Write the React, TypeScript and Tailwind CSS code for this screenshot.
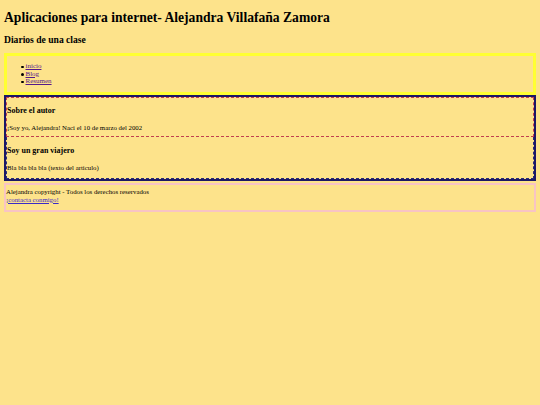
import React from "react";

function NavItem({ label }: { label: string }) {
  return (
    <li className="flex items-center">
      <span className="mr-[2px] inline-block h-[2.5px] w-[2.5px] rounded-full bg-black" />
      <a href="#" className="text-[#551a8b] underline">{label}</a>
    </li>
  );
}

export default function App() {
  return (
    <div
      className="min-h-[405px] bg-[#fde38b] px-[4px] pt-[1px] pb-[4px] text-black"
      style={{ fontFamily: '"Liberation Serif", "Times New Roman", serif' }}
    >
      <h1 className="mt-[9px] mb-[8px] text-[13.6px] font-bold leading-[16px]">
        Aplicaciones para internet- Alejandra Villafaña Zamora
      </h1>
      <h3 className="mb-[7px] text-[9.6px] font-bold leading-[12px]">Diarios de una clase</h3>
      <nav className="border-[3px] border-[#ffff33] pt-[7px] pb-[6px]">
        <ul className="list-none pl-[14px] text-[7px] leading-[7.6px]">
          <NavItem label="inicio" />
          <NavItem label="Blog" />
          <NavItem label="Resumen" />
        </ul>
      </nav>
      <main className="border-2 border-[#1c1866]">
        <article className="border border-dashed border-[#c0404f]">
          <h4 className="pt-[8px] text-[8px] font-bold leading-[10px]">Sobre el autor</h4>
          <p className="mt-[8px] pb-[4px] text-[6.8px] leading-[8px]">
            ¡Soy yo, Alejandra! Naci el 10 de marzo del 2002
          </p>
        </article>
        <article className="border border-t-0 border-dashed border-[#2a2a7a]">
          <h4 className="pt-[9px] text-[8px] font-bold leading-[10px]">Soy un gran viajero</h4>
          <p className="mt-[8px] pb-[6px] text-[6.8px] leading-[8px]">Bla bla bla bla (texto del articulo)</p>
        </article>
      </main>
      <footer className="mt-[2px] border-[2px] border-[#f8c4c4] pt-[3px] pb-[6px] text-[6.8px] leading-[8px]">
        <div>Alejandra copyright - Todos los derechos reservados</div>
        <a href="#" className="text-[#3b2bc8] underline">¡contacta conmigo!</a>
      </footer>
    </div>
  );
}
